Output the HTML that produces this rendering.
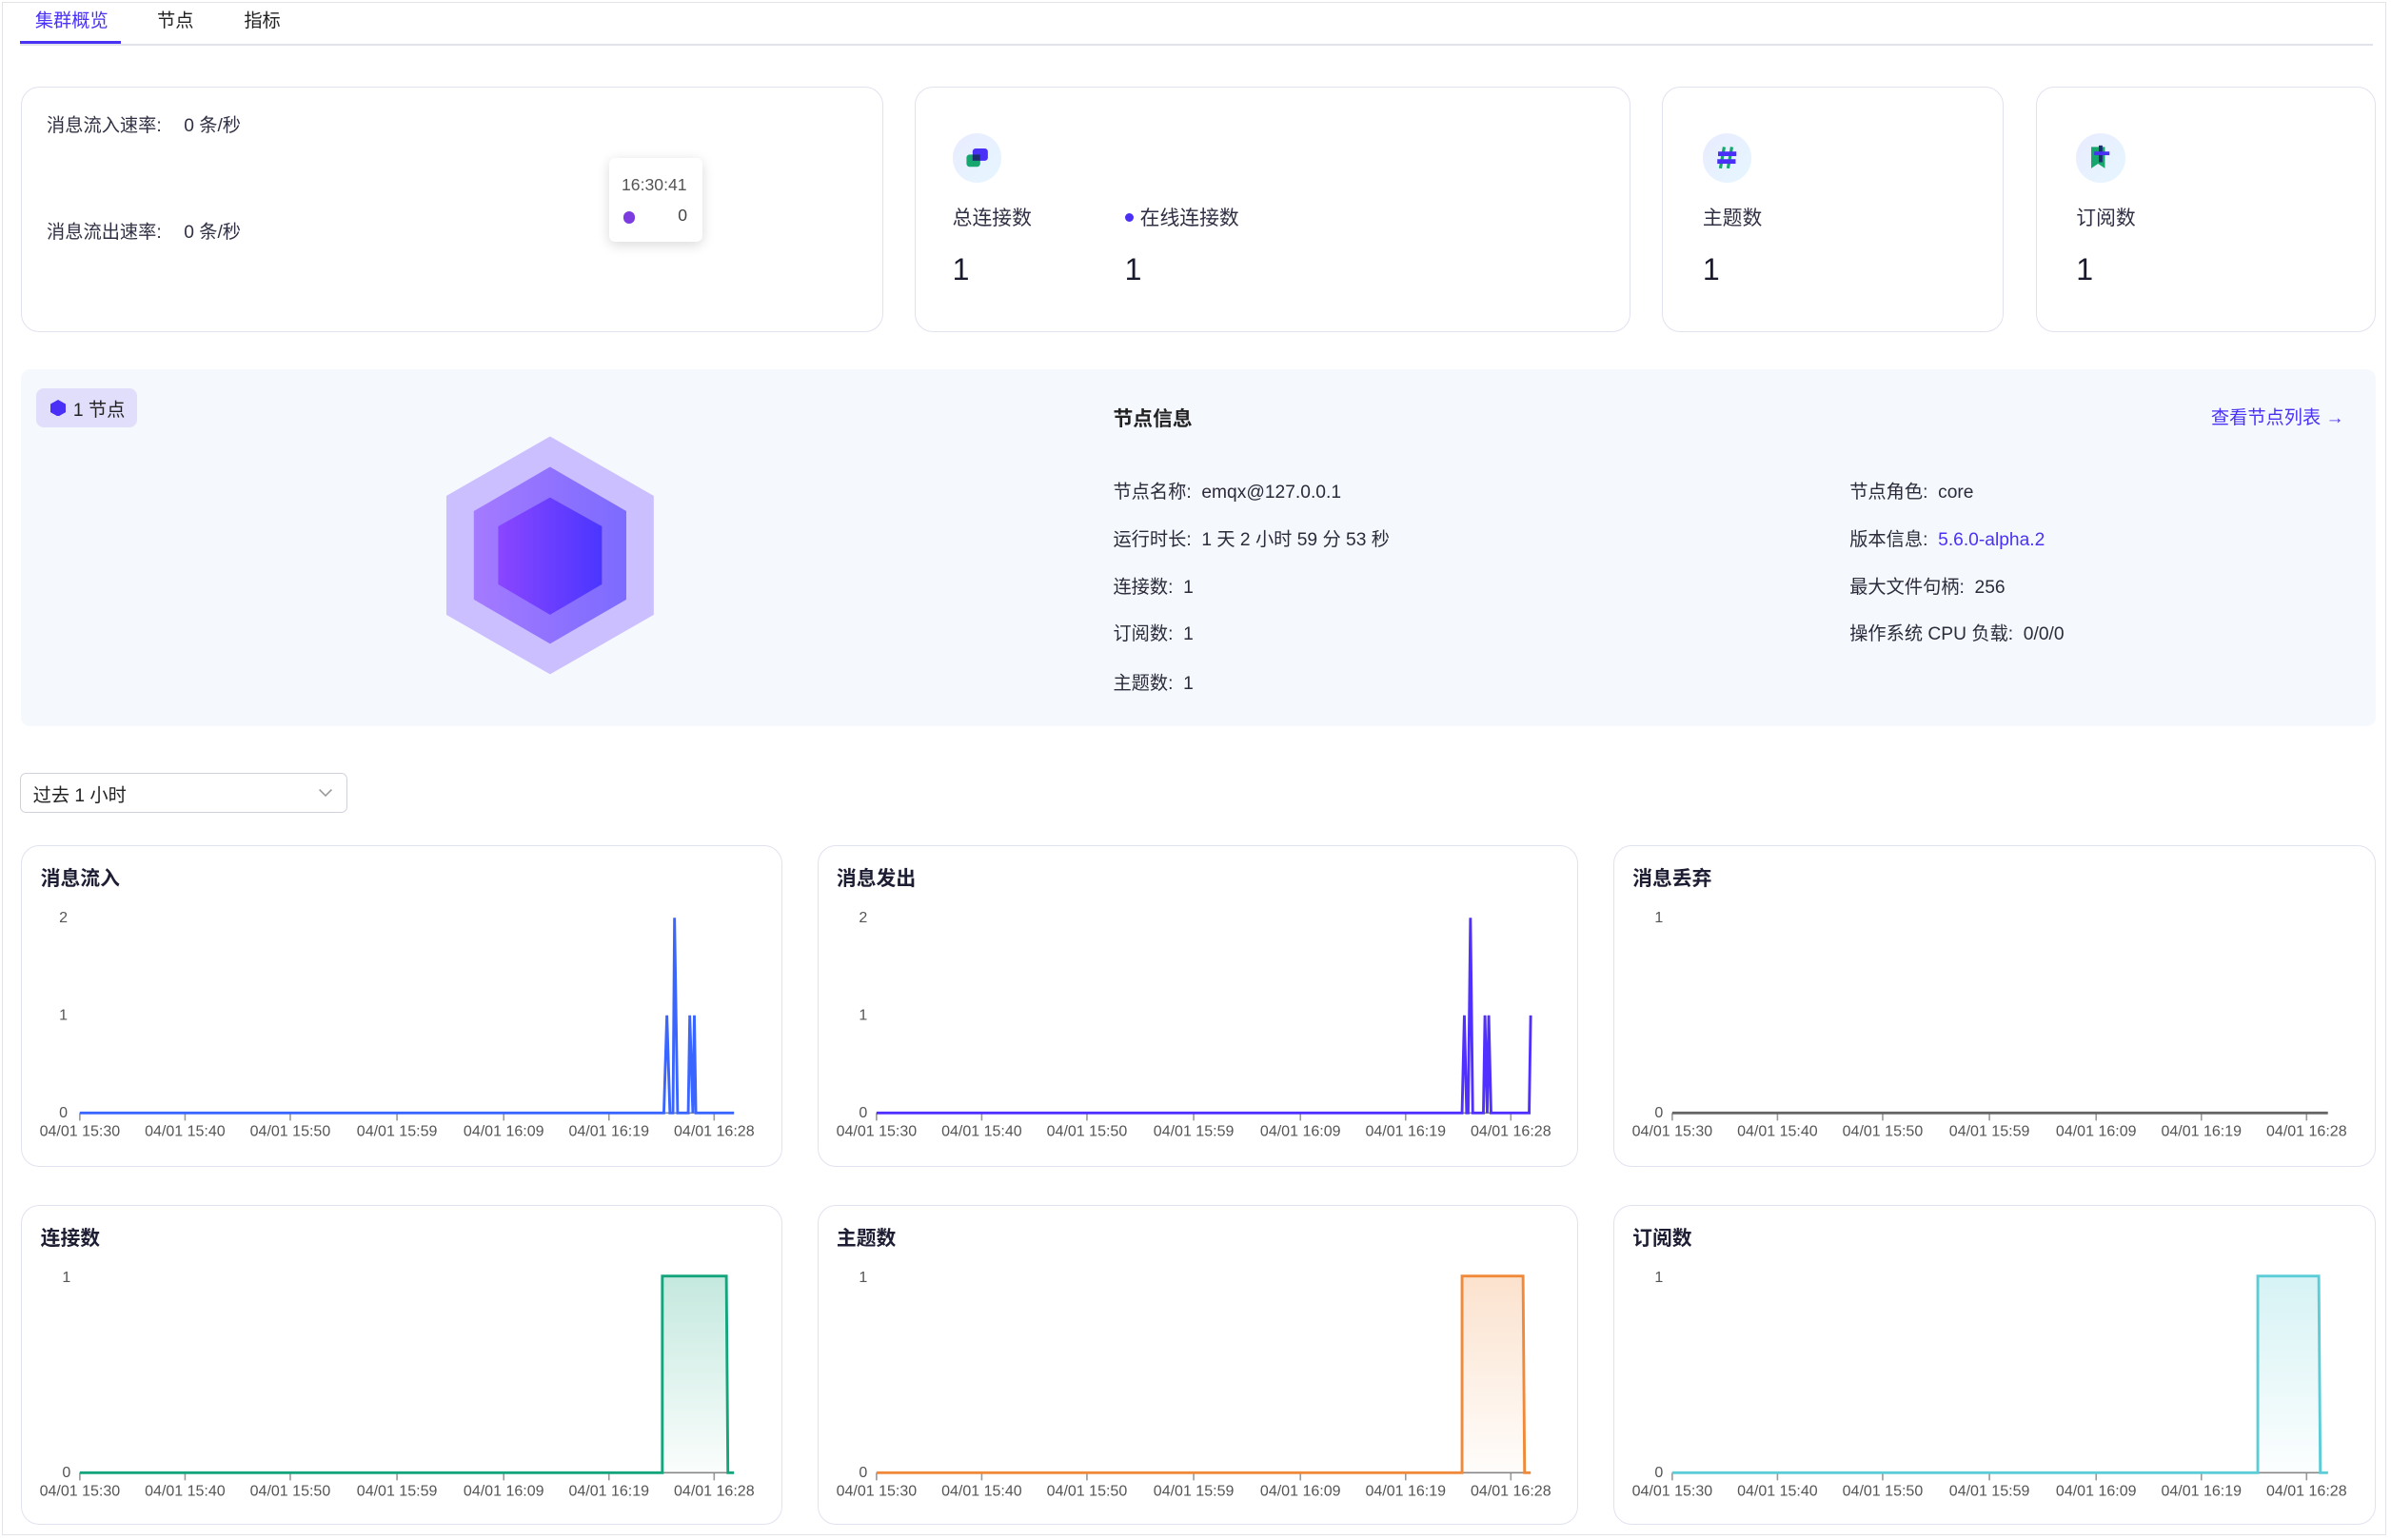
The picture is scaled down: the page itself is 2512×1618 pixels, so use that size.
<!DOCTYPE html>
<html><head><meta charset="utf-8">
<style>
html,body{margin:0;padding:0;width:2512px;height:1618px;overflow:hidden;background:#fff}
#w{zoom:1.602;width:1568px;height:1010px;position:relative;font-family:"Liberation Sans","Noto Sans CJK SC",sans-serif;color:#1d1d2c;font-size:12px}
.a{position:absolute}
.frame{left:1px;top:1px;width:1564px;height:1006px;border:1px solid #e4e4e8;box-sizing:border-box}
.card{position:absolute;border:1px solid #e1e2ef;border-radius:12px;background:#fff;box-sizing:border-box}
.lab{color:#303044;font-size:12px}
.big{font-size:20px;color:#1a1a2e}
.ic{position:absolute;width:32px;height:32px;border-radius:50%;background:linear-gradient(135deg,#e9ecff,#e6f6ff)}
.row{position:absolute;font-size:12px;color:#2b2b3b;white-space:nowrap}
.ct{position:absolute;left:12px;top:11px;font-size:13px;font-weight:bold;color:#1d1d33}
svg text{font-family:"Liberation Sans",sans-serif;font-size:10px;fill:#555}
</style></head><body><div id="w">
<div class="a frame"></div>
<div class="a" style="left:23px;top:4px;color:#4a32f5;font-size:12px">集群概览</div>
<div class="a" style="left:103px;top:4px;font-size:12px;color:#222">节点</div>
<div class="a" style="left:160px;top:4px;font-size:12px;color:#222">指标</div>
<div class="a" style="left:13px;top:29px;width:1543px;height:1px;background:#e2e2ea"></div>
<div class="a" style="left:13px;top:27px;width:66px;height:2px;background:#4a32f5"></div>

<div class="card" style="left:14px;top:57px;width:565px;height:161px">
 <div class="a lab" style="left:16px;top:15px">消息流入速率:</div><div class="a lab" style="left:106px;top:15px">0 条/秒</div>
 <div class="a lab" style="left:16px;top:85px">消息流出速率:</div><div class="a lab" style="left:106px;top:85px">0 条/秒</div>
 <div class="a" style="left:385px;top:46px;width:61px;height:55px;background:#fff;border-radius:4px;box-shadow:0 2px 8px rgba(0,0,0,.15)">
  <div class="a" style="left:8px;top:11px;font-size:11px;color:#555">16:30:41</div>
  <div class="a" style="left:9px;top:35px;width:8px;height:8px;border-radius:50%;background:#7d3cdf"></div>
  <div class="a" style="left:45px;top:31px;font-size:11px;color:#444">0</div>
 </div>
</div>

<div class="card" style="left:600px;top:57px;width:469px;height:161px">
 <div class="ic" style="left:24px;top:30px"><svg width="32" height="32"><rect x="13" y="10" width="10" height="8" rx="2" fill="#4a2ff6"/><rect x="9" y="14" width="9" height="8" rx="2" fill="#17a66d"/><rect x="13" y="14" width="5" height="4" fill="#1a2d6e"/></svg></div>
 <div class="a lab" style="left:24px;top:75px;font-size:13px">总连接数</div>
 <div class="a" style="left:137px;top:82px;width:6px;height:6px;border-radius:50%;background:#4a2ff6"></div>
 <div class="a lab" style="left:147px;top:75px;font-size:13px">在线连接数</div>
 <div class="a big" style="left:24px;top:108px">1</div><div class="a big" style="left:137px;top:108px">1</div>
</div>
<div class="card" style="left:1090px;top:57px;width:224px;height:161px">
 <div class="ic" style="left:26px;top:30px"><svg width="32" height="32"><path d="M14 9 L11.5 23 M19 9 L16.5 23" stroke="#17a66d" stroke-width="2"/><rect x="10" y="12" width="12" height="3" fill="#4a2ff6"/><rect x="9.5" y="17" width="12" height="3" fill="#4a2ff6"/></svg></div>
 <div class="a lab" style="left:26px;top:75px;font-size:13px">主题数</div>
 <div class="a big" style="left:26px;top:108px">1</div>
</div>
<div class="card" style="left:1335px;top:57px;width:223px;height:161px">
 <div class="ic" style="left:26px;top:30px"><svg width="32" height="32"><path d="M10 9 H19 V23 L14.5 20 L10 23 Z" fill="#17a66d"/><rect x="15" y="8" width="2.4" height="11" fill="#1a2d6e"/><rect x="12" y="12" width="10" height="2.4" fill="#4a2ff6"/></svg></div>
 <div class="a lab" style="left:26px;top:75px;font-size:13px">订阅数</div>
 <div class="a big" style="left:26px;top:108px">1</div>
</div>

<div class="a" style="left:14px;top:242px;width:1544px;height:234px;background:#f5f8fd;border-radius:6px">
 <div class="a" style="left:10px;top:13px;width:66px;height:25px;background:#e1defb;border-radius:5px">
  <svg class="a" style="left:9px;top:7px" width="10" height="11"><polygon points="5,0 10,2.8 10,8.2 5,11 0,8.2 0,2.8" fill="#4a2ff6"/></svg>
  <div class="a" style="left:24px;top:4px;font-size:12px;color:#222">1 节点</div>
 </div>
 <svg class="a" style="left:0;top:0" width="700" height="234">
  <defs><linearGradient id="hg" x1="0" x2="1"><stop offset="0" stop-color="#8a46ff"/><stop offset="1" stop-color="#4b36ff"/></linearGradient>
  <linearGradient id="hm" x1="0" x2="1"><stop offset="0" stop-color="#a47aff"/><stop offset="1" stop-color="#7c6bff"/></linearGradient></defs>
  <polygon points="347,44 415,83 415,161 347,200 279,161 279,83" fill="#cbbfff"/>
  <polygon points="347,64 397,93 397,151 347,180 297,151 297,93" fill="url(#hm)"/>
  <polygon points="347,84 381,103 381,141 347,161 313,141 313,103" fill="url(#hg)"/>
 </svg>
 <div class="a" style="left:716px;top:22px;font-size:13px;font-weight:bold;color:#222">节点信息</div>
 <div class="a" style="left:1436px;top:22px;font-size:12px;color:#4a32f5">查看节点列表 →</div>
 <div class="row" style="left:716px;top:71px">节点名称:&nbsp;&nbsp;emqx@127.0.0.1</div>
 <div class="row" style="left:716px;top:102px">运行时长:&nbsp;&nbsp;1 天 2 小时 59 分 53 秒</div>
 <div class="row" style="left:716px;top:133px">连接数:&nbsp;&nbsp;1</div>
 <div class="row" style="left:716px;top:164px">订阅数:&nbsp;&nbsp;1</div>
 <div class="row" style="left:716px;top:196px">主题数:&nbsp;&nbsp;1</div>
 <div class="row" style="left:1199px;top:71px">节点角色:&nbsp;&nbsp;core</div>
 <div class="row" style="left:1199px;top:102px">版本信息:&nbsp;&nbsp;<span style="color:#4a32f5">5.6.0-alpha.2</span></div>
 <div class="row" style="left:1199px;top:133px">最大文件句柄:&nbsp;&nbsp;256</div>
 <div class="row" style="left:1199px;top:164px">操作系统 CPU 负载:&nbsp;&nbsp;0/0/0</div>
</div>

<div class="a" style="left:13px;top:507px;width:215px;height:26px;border:1px solid #cfd1dc;border-radius:4px;box-sizing:border-box">
 <div class="a" style="left:8px;top:4px;font-size:12px;color:#222">过去 1 小时</div>
 <svg class="a" style="left:195px;top:9px" width="10" height="7"><path d="M1 1 L5 5 L9 1" stroke="#999" fill="none"/></svg>
</div>

<!-- charts -->
<div class="card" style="left:14px;top:554px;width:499px;height:211px"><div class="ct">消息流入</div>
<svg class="a" style="left:0;top:0" width="499" height="211">
<text x="30" y="50" text-anchor="end">2</text><text x="30" y="114" text-anchor="end">1</text><text x="30" y="178" text-anchor="end">0</text>
<line x1="38" y1="175" x2="467" y2="175" stroke="#888" stroke-width="1"/>
<g stroke="#999"><line x1="38" y1="175" x2="38" y2="180"/><line x1="107" y1="175" x2="107" y2="180"/><line x1="176" y1="175" x2="176" y2="180"/><line x1="246" y1="175" x2="246" y2="180"/><line x1="316" y1="175" x2="316" y2="180"/><line x1="385" y1="175" x2="385" y2="180"/><line x1="454" y1="175" x2="454" y2="180"/></g>
<polyline points="38,175 421,175 423,111 425,175 427,175 428,47 430,175 437,175 438,111 440,175 441,111 442,175 467,175" fill="none" stroke="#3a66ff" stroke-width="1.8"/>
<g text-anchor="middle"><text x="38" y="190">04/01 15:30</text><text x="107" y="190">04/01 15:40</text><text x="176" y="190">04/01 15:50</text><text x="246" y="190">04/01 15:59</text><text x="316" y="190">04/01 16:09</text><text x="385" y="190">04/01 16:19</text><text x="454" y="190">04/01 16:28</text></g>
</svg></div>

<div class="card" style="left:536px;top:554px;width:499px;height:211px"><div class="ct">消息发出</div>
<svg class="a" style="left:0;top:0" width="499" height="211">
<text x="32" y="50" text-anchor="end">2</text><text x="32" y="114" text-anchor="end">1</text><text x="32" y="178" text-anchor="end">0</text>
<line x1="38" y1="175" x2="467" y2="175" stroke="#888"/>
<g stroke="#999"><line x1="38" y1="175" x2="38" y2="180"/><line x1="107" y1="175" x2="107" y2="180"/><line x1="176" y1="175" x2="176" y2="180"/><line x1="246" y1="175" x2="246" y2="180"/><line x1="316" y1="175" x2="316" y2="180"/><line x1="385" y1="175" x2="385" y2="180"/><line x1="454" y1="175" x2="454" y2="180"/></g>
<polyline points="38,175 422,175 423.5,111 425,175 426,175 427.5,47 429,175 436,175 437,111 438.5,175 439.5,111 441,175 466,175 467,111" fill="none" stroke="#5030ff" stroke-width="1.8"/>
<g text-anchor="middle"><text x="38" y="190">04/01 15:30</text><text x="107" y="190">04/01 15:40</text><text x="176" y="190">04/01 15:50</text><text x="246" y="190">04/01 15:59</text><text x="316" y="190">04/01 16:09</text><text x="385" y="190">04/01 16:19</text><text x="454" y="190">04/01 16:28</text></g>
</svg></div>

<div class="card" style="left:1058px;top:554px;width:500px;height:211px"><div class="ct">消息丢弃</div>
<svg class="a" style="left:0;top:0" width="500" height="211">
<text x="32" y="50" text-anchor="end">1</text><text x="32" y="178" text-anchor="end">0</text>
<g stroke="#999"><line x1="38" y1="175" x2="38" y2="180"/><line x1="107" y1="175" x2="107" y2="180"/><line x1="176" y1="175" x2="176" y2="180"/><line x1="246" y1="175" x2="246" y2="180"/><line x1="316" y1="175" x2="316" y2="180"/><line x1="385" y1="175" x2="385" y2="180"/><line x1="454" y1="175" x2="454" y2="180"/></g>
<line x1="38" y1="175" x2="468" y2="175" stroke="#666" stroke-width="1.8"/>
<g text-anchor="middle"><text x="38" y="190">04/01 15:30</text><text x="107" y="190">04/01 15:40</text><text x="176" y="190">04/01 15:50</text><text x="246" y="190">04/01 15:59</text><text x="316" y="190">04/01 16:09</text><text x="385" y="190">04/01 16:19</text><text x="454" y="190">04/01 16:28</text></g>
</svg></div>

<div class="card" style="left:14px;top:790px;width:499px;height:210px"><div class="ct">连接数</div>
<svg class="a" style="left:0;top:0" width="499" height="210">
<defs><linearGradient id="g1" x1="0" y1="0" x2="0" y2="1"><stop offset="0" stop-color="#14a57c" stop-opacity=".25"/><stop offset="1" stop-color="#14a57c" stop-opacity=".02"/></linearGradient></defs>
<text x="32" y="50" text-anchor="end">1</text><text x="32" y="178" text-anchor="end">0</text>
<g stroke="#999"><line x1="38" y1="175" x2="38" y2="180"/><line x1="107" y1="175" x2="107" y2="180"/><line x1="176" y1="175" x2="176" y2="180"/><line x1="246" y1="175" x2="246" y2="180"/><line x1="316" y1="175" x2="316" y2="180"/><line x1="385" y1="175" x2="385" y2="180"/><line x1="454" y1="175" x2="454" y2="180"/></g>
<line x1="38" y1="175" x2="467" y2="175" stroke="#888"/>
<path d="M420 175 L420 46 L462 46 L463 175 Z" fill="url(#g1)"/>
<polyline points="38,175 420,175 420,46 462,46 463,175 467,175" fill="none" stroke="#14a57c" stroke-width="1.8"/>
<g text-anchor="middle"><text x="38" y="190">04/01 15:30</text><text x="107" y="190">04/01 15:40</text><text x="176" y="190">04/01 15:50</text><text x="246" y="190">04/01 15:59</text><text x="316" y="190">04/01 16:09</text><text x="385" y="190">04/01 16:19</text><text x="454" y="190">04/01 16:28</text></g>
</svg></div>

<div class="card" style="left:536px;top:790px;width:499px;height:210px"><div class="ct">主题数</div>
<svg class="a" style="left:0;top:0" width="499" height="210">
<defs><linearGradient id="g2" x1="0" y1="0" x2="0" y2="1"><stop offset="0" stop-color="#f08a3a" stop-opacity=".25"/><stop offset="1" stop-color="#f08a3a" stop-opacity=".02"/></linearGradient></defs>
<text x="32" y="50" text-anchor="end">1</text><text x="32" y="178" text-anchor="end">0</text>
<g stroke="#999"><line x1="38" y1="175" x2="38" y2="180"/><line x1="107" y1="175" x2="107" y2="180"/><line x1="176" y1="175" x2="176" y2="180"/><line x1="246" y1="175" x2="246" y2="180"/><line x1="316" y1="175" x2="316" y2="180"/><line x1="385" y1="175" x2="385" y2="180"/><line x1="454" y1="175" x2="454" y2="180"/></g>
<line x1="38" y1="175" x2="467" y2="175" stroke="#888"/>
<path d="M422 175 L422 46 L462 46 L463 175 Z" fill="url(#g2)"/>
<polyline points="38,175 422,175 422,46 462,46 463,175 467,175" fill="none" stroke="#f08a3a" stroke-width="1.8"/>
<g text-anchor="middle"><text x="38" y="190">04/01 15:30</text><text x="107" y="190">04/01 15:40</text><text x="176" y="190">04/01 15:50</text><text x="246" y="190">04/01 15:59</text><text x="316" y="190">04/01 16:09</text><text x="385" y="190">04/01 16:19</text><text x="454" y="190">04/01 16:28</text></g>
</svg></div>

<div class="card" style="left:1058px;top:790px;width:500px;height:210px"><div class="ct">订阅数</div>
<svg class="a" style="left:0;top:0" width="500" height="210">
<defs><linearGradient id="g3" x1="0" y1="0" x2="0" y2="1"><stop offset="0" stop-color="#5ccdd6" stop-opacity=".25"/><stop offset="1" stop-color="#5ccdd6" stop-opacity=".02"/></linearGradient></defs>
<text x="32" y="50" text-anchor="end">1</text><text x="32" y="178" text-anchor="end">0</text>
<g stroke="#999"><line x1="38" y1="175" x2="38" y2="180"/><line x1="107" y1="175" x2="107" y2="180"/><line x1="176" y1="175" x2="176" y2="180"/><line x1="246" y1="175" x2="246" y2="180"/><line x1="316" y1="175" x2="316" y2="180"/><line x1="385" y1="175" x2="385" y2="180"/><line x1="454" y1="175" x2="454" y2="180"/></g>
<line x1="38" y1="175" x2="468" y2="175" stroke="#888"/>
<path d="M422 175 L422 46 L462 46 L463 175 Z" fill="url(#g3)"/>
<polyline points="38,175 422,175 422,46 462,46 463,175 468,175" fill="none" stroke="#5ccdd6" stroke-width="1.8"/>
<g text-anchor="middle"><text x="38" y="190">04/01 15:30</text><text x="107" y="190">04/01 15:40</text><text x="176" y="190">04/01 15:50</text><text x="246" y="190">04/01 15:59</text><text x="316" y="190">04/01 16:09</text><text x="385" y="190">04/01 16:19</text><text x="454" y="190">04/01 16:28</text></g>
</svg></div>

</div></body></html>
